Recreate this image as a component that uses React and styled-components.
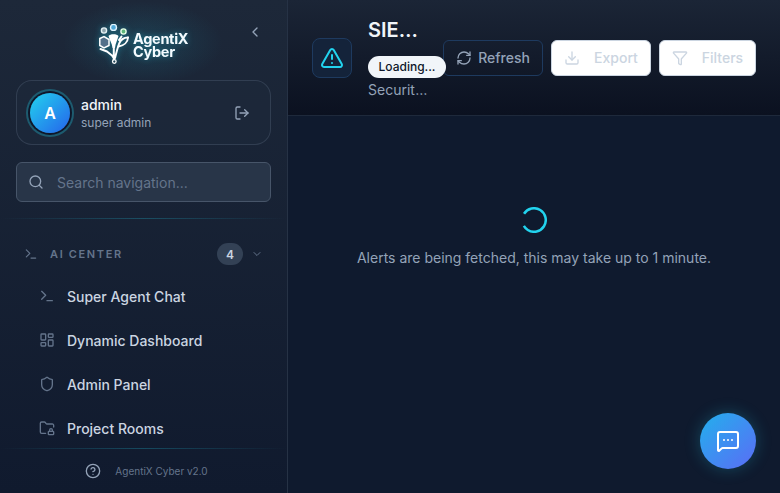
import React from 'react'
import styled, { createGlobalStyle } from 'styled-components'
import {
  ChevronDown,
  ChevronLeft,
  CircleHelp,
  Download,
  Funnel,
  FolderLock,
  LayoutDashboard,
  LogOut,
  MessageSquareMore,
  RefreshCw,
  Search,
  Shield,
  Terminal,
  TriangleAlert,
} from 'lucide-react'

const GlobalStyle = createGlobalStyle`
  html, body {
    margin: 0;
    height: 100%;
    overflow: hidden;
    background: #0f1a2e;
    font-family: Inter, "Noto Sans", sans-serif;
  }
  * { box-sizing: border-box; }
  #root { height: 100%; }
`

const Shell = styled.div`
  display: flex;
  height: 493px;
  width: 780px;
  overflow: hidden;
`

const Sidebar = styled.aside`
  width: 288px;
  flex-shrink: 0;
  display: flex;
  flex-direction: column;
  background: linear-gradient(180deg, #1d2839 0%, #101a2e 100%);
  border-right: 1px solid #263245;
`

const Brand = styled.div`
  height: 80px;
  flex-shrink: 0;
  display: flex;
  align-items: flex-start;
  justify-content: space-between;
  padding: 24px 24px 0 99px;
  background: radial-gradient(ellipse 80px 42px at 143px 43px, rgba(34, 211, 238, 0.14), transparent);
`

const Logo = styled.div`
  display: flex;
  align-items: center;
  gap: 2px;
  height: 40px;
  filter: drop-shadow(0 0 3px rgba(34, 211, 238, 0.4));
`

const LogoText = styled.div`
  font-size: 14.5px;
  font-weight: 700;
  line-height: 13px;
  color: #f4fbff;
  letter-spacing: -0.3px;
  margin-top: 2px;
`

const CollapseButton = styled.button`
  display: flex;
  padding: 0;
  border: 0;
  background: none;
  color: #94a3b8;
`

const UserCard = styled.div`
  margin: 0 16px;
  height: 65px;
  flex-shrink: 0;
  display: flex;
  align-items: center;
  padding: 0 20px 0 12px;
  background: rgba(30, 41, 59, 0.5);
  border: 1px solid rgba(71, 85, 105, 0.5);
  border-radius: 16px;
  color: #94a3b8;
`

const Avatar = styled.div`
  width: 40px;
  height: 40px;
  margin-left: 1px;
  flex-shrink: 0;
  display: flex;
  align-items: center;
  justify-content: center;
  border-radius: 50%;
  background: linear-gradient(135deg, #22d3ee, #2563eb);
  box-shadow: 0 0 0 2px #0f172a, 0 0 0 4px rgba(34, 211, 238, 0.3);
  color: #fff;
  font-size: 16px;
  font-weight: 600;
`

const UserText = styled.div`
  flex: 1;
  margin-left: 11px;
`

const UserName = styled.div`
  font-size: 14px;
  font-weight: 500;
  line-height: 20px;
  color: #f1f5f9;
`

const UserRole = styled.div`
  font-size: 12px;
  line-height: 16px;
  color: #94a3b8;
`

const SearchBox = styled.div`
  margin: 17px 16px 0;
  height: 40px;
  flex-shrink: 0;
  display: flex;
  align-items: center;
  gap: 13px;
  padding: 0 11px;
  background: #283548;
  border: 1px solid #475569;
  border-radius: 6px;
  color: #94a3b8;
`

const SearchInput = styled.input`
  flex: 1;
  min-width: 0;
  border: 0;
  padding: 0;
  outline: 0;
  background: none;
  font: 14px Inter, sans-serif;
  color: #f1f5f9;
  &::placeholder { color: #64748b; opacity: 1; }
`

const Divider = styled.div`
  height: 1px;
  flex-shrink: 0;
  margin-top: ${p => p.$top || 0}px;
  background: linear-gradient(90deg, transparent, rgba(34, 211, 238, 0.25), transparent);
`

const Nav = styled.nav`
  flex: 1;
  min-height: 0;
  overflow: hidden;
  margin-top: 15px;
  padding: 0 16px;
`

const SectionHead = styled.div`
  height: 40px;
  display: flex;
  align-items: center;
  padding: 0 6px 0 8px;
  color: #64748b;
`

const SectionTitle = styled.span`
  flex: 1;
  margin-left: 12px;
  font-size: 11px;
  font-weight: 600;
  letter-spacing: 1.65px;
`

const CountBadge = styled.span`
  width: 26px;
  height: 22px;
  display: flex;
  align-items: center;
  justify-content: center;
  border-radius: 11px;
  background: #334155;
  color: #cbd5e1;
  font-size: 12px;
  font-weight: 600;
`

const SectionChevron = styled(ChevronDown)`
  margin: 0 2px 0 8px;
`

const NavItem = styled.a`
  height: 44px;
  display: flex;
  align-items: center;
  gap: 12px;
  padding-left: 23px;
  color: #cbd5e1;
  font-size: 14px;
  font-weight: 500;
  & > svg { color: #64748b; }
`

const Footer = styled.div`
  height: 44px;
  flex-shrink: 0;
  display: flex;
  align-items: center;
  justify-content: center;
  gap: 14px;
  padding-left: 6px;
  color: #64748b;
  font-size: 10px;
  & > svg { color: #94a3b8; }
`

const Main = styled.main`
  flex: 1;
  min-width: 0;
  display: flex;
  flex-direction: column;
  background: #0f1a2e;
`

const Header = styled.header`
  height: 116px;
  flex-shrink: 0;
  display: flex;
  align-items: center;
  gap: 14px;
  padding: 0 24px;
  background: linear-gradient(180deg, #1b2536 0%, #0b1120 100%);
  border-bottom: 1px solid #1e293b;
`

const Heading = styled.div`
  flex: 1;
  min-width: 0;
  display: flex;
  align-items: center;
  gap: 16px;
`

const AlertTile = styled.div`
  width: 40px;
  height: 40px;
  flex-shrink: 0;
  display: flex;
  align-items: center;
  justify-content: center;
  border-radius: 8px;
  background: #14233a;
  border: 1px solid #1e3a5f;
  color: #22d3ee;
`

const TitleBlock = styled.div`
  flex: 1;
  min-width: 0;
`

const Title = styled.h1`
  margin: 0 0 12px;
  font-size: 20px;
  font-weight: 600;
  line-height: 28px;
  color: #f1f5f9;
  white-space: nowrap;
  overflow: hidden;
  text-overflow: ellipsis;
`

const LoadingBadge = styled.div`
  display: flex;
  width: fit-content;
  height: 22px;
  align-items: center;
  padding: 0 10.5px;
  border-radius: 11px;
  background: #f1f5f9;
  color: #0f172a;
  font-size: 12px;
  font-weight: 500;
  white-space: nowrap;
  position: relative;
  z-index: 1;
`

const Subtitle = styled.div`
  margin-top: 2px;
  font-size: 14px;
  line-height: 20px;
  color: #94a3b8;
  white-space: nowrap;
  overflow: hidden;
  text-overflow: ellipsis;
`

const Actions = styled.div`
  display: flex;
  flex-shrink: 0;
  gap: 8px;
`

const ActionButton = styled.button`
  height: 36px;
  width: ${p => p.$width}px;
  display: flex;
  align-items: center;
  justify-content: center;
  gap: ${p => (p.$disabled ? 14 : 6)}px;
  padding: 0;
  border-radius: 6px;
  font: 500 14px Inter, sans-serif;
  background: ${p => (p.$disabled ? '#fff' : 'transparent')};
  border: 1px solid ${p => (p.$disabled ? '#cbd5e1' : '#1e3a5f')};
  color: ${p => (p.$disabled ? '#cbd5e1' : '#94a3b8')};
`

const Body = styled.div`
  flex: 1;
  display: flex;
  flex-direction: column;
  align-items: center;
  padding-top: 91px;
`

const LoadingText = styled.p`
  margin: 15px 0 0;
  font-size: 14px;
  line-height: 20px;
  color: #94a3b8;
`

const ChatButton = styled.button`
  position: fixed;
  right: 24px;
  bottom: 24px;
  width: 56px;
  height: 56px;
  display: flex;
  align-items: center;
  justify-content: center;
  padding: 0;
  border: 0;
  border-radius: 50%;
  background: linear-gradient(135deg, #22b0ec, #5b6cf6);
  box-shadow: 0 0 16px rgba(34, 211, 238, 0.25);
  color: #fff;
`

const Spinner = () => (
  <svg width="26" height="26" viewBox="0 0 26 26" fill="none">
    <circle
      cx="13"
      cy="13"
      r="11.75"
      stroke="#22d3ee"
      strokeWidth="2.5"
      strokeDasharray="60.7 13.1"
      transform="rotate(212 13 13)"
    />
  </svg>
)

const LogoMark = () => (
  <svg width="32" height="40" viewBox="0 0 32 40" fill="none">
    <circle cx="5" cy="6.5" r="2.6" fill="#8fa5ae" stroke="#e6f2f5" strokeWidth="1.4" />
    <circle cx="14.5" cy="3.4" r="3" fill="#4fa8d8" stroke="#dff4ff" strokeWidth="1.4" />
    <circle cx="24.5" cy="7.5" r="2.6" fill="#5fb87c" stroke="#e8ffe8" strokeWidth="1.4" />
    <path d="M0.8 14.5 L5 12.5 L10 15.5 V21.5 L5 24 L0.8 21.5 Z" fill="#53708a" stroke="#fff" strokeWidth="1.5" />
    <path d="M9.5 12 C11 9.5 18 9.5 19.5 12 C18.5 16 16.5 19 16 24 H13.5 C13 19 10.5 16 9.5 12 Z" fill="#fff" />
    <path d="M1.5 25 L8 27.5 L13 31.5 L15 34.5 M29 13.5 C24 13.5 21.5 16 20 20 C18.5 24 17.5 28 16 34 M22.5 12.5 L20 16 M14.8 24 V35.5" stroke="#fff" strokeWidth="2" strokeLinecap="round" strokeLinejoin="round" />
    <path d="M29 13.5 C29 18 25 21.5 19.5 22.5" stroke="#fff" strokeWidth="1.8" strokeLinecap="round" />
    <circle cx="15.3" cy="37.5" r="1.8" stroke="#fff" strokeWidth="1.3" />
  </svg>
)

const navItems = [
  { label: 'Super Agent Chat', Icon: Terminal },
  { label: 'Dynamic Dashboard', Icon: LayoutDashboard },
  { label: 'Admin Panel', Icon: Shield },
  { label: 'Project Rooms', Icon: FolderLock },
]

export default function App() {
  return (
    <Shell>
      <GlobalStyle />
      <Sidebar>
        <Brand>
          <Logo>
            <LogoMark />
            <LogoText>AgentiX<br />Cyber</LogoText>
          </Logo>
          <CollapseButton><ChevronLeft size={16} /></CollapseButton>
        </Brand>
        <UserCard>
          <Avatar>A</Avatar>
          <UserText>
            <UserName>admin</UserName>
            <UserRole>super admin</UserRole>
          </UserText>
          <LogOut size={16} />
        </UserCard>
        <SearchBox>
          <Search size={16} />
          <SearchInput placeholder="Search navigation..." />
        </SearchBox>
        <Divider $top={16} />
        <Nav>
          <SectionHead>
            <Terminal size={14} />
            <SectionTitle>AI CENTER</SectionTitle>
            <CountBadge>4</CountBadge>
            <SectionChevron size={12} />
          </SectionHead>
          {navItems.map(({ label, Icon }) => (
            <NavItem key={label}>
              <Icon size={16} />
              {label}
            </NavItem>
          ))}
        </Nav>
        <Divider />
        <Footer>
          <CircleHelp size={16} />
          AgentiX Cyber v2.0
        </Footer>
      </Sidebar>
      <Main>
        <Header>
          <Heading>
            <AlertTile><TriangleAlert size={24} /></AlertTile>
            <TitleBlock>
              <Title>SIEM Alerts</Title>
              <LoadingBadge>Loading...</LoadingBadge>
              <Subtitle>Security alerts</Subtitle>
            </TitleBlock>
          </Heading>
          <Actions>
            <ActionButton $width={100}><RefreshCw size={16} />Refresh</ActionButton>
            <ActionButton $width={100} $disabled><Download size={16} />Export</ActionButton>
            <ActionButton $width={97} $disabled><Funnel size={16} />Filters</ActionButton>
          </Actions>
        </Header>
        <Body>
          <Spinner />
          <LoadingText>Alerts are being fetched, this may take up to 1 minute.</LoadingText>
        </Body>
      </Main>
      <ChatButton><MessageSquareMore size={24} /></ChatButton>
    </Shell>
  )
}
